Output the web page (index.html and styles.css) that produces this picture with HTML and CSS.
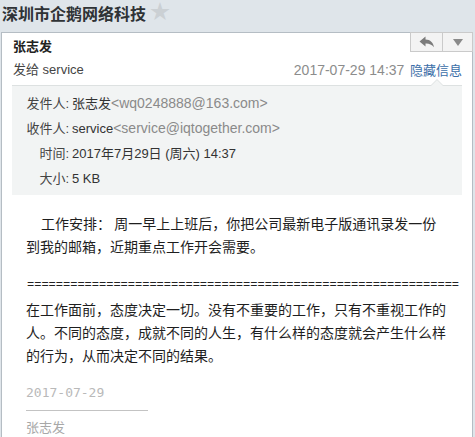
FILE: index.html
```html
<!DOCTYPE html>
<html lang="zh-CN">
<head>
    <meta charset="UTF-8">
    <meta name="viewport" content="width=device-width, initial-scale=1.0">
    <title>深圳市企鹅网络科技</title>
    <link rel="stylesheet" href="styles.css">
</head>
<body>
    <div class="topbar">
        <span class="subject">深圳市企鹅网络科技</span>
        <span class="star">★</span>
    </div>

    <div class="card">
        <div class="actions">
            <button class="act reply" title="回复">
                <svg width="16" height="12" viewBox="0 0 16 12"><path d="M6.5 0.5 L0.5 5.5 L6.5 10.5 V7.4 C10 7.2 12.6 8.3 15 11.2 C14.2 6.6 11.4 3.8 6.5 3.6 Z" fill="#7b7b7b"/></svg>
            </button>
            <button class="act more" title="更多">
                <svg width="10" height="7" viewBox="0 0 10 7"><path d="M0 0 H10 L5 7 Z" fill="#8a8a8a"/></svg>
            </button>
        </div>

        <div class="head">
            <div class="from-name">张志发</div>
            <div class="head-row">
                <span class="to">发给 service</span>
                <span class="meta">
                    <span class="date">2017-07-29 14:37</span>
                    <a class="toggle" href="#">隐藏信息</a>
                </span>
            </div>
        </div>

        <div class="info">
            <div class="info-row">
                <span class="label">发件人:</span>
                <span class="value">张志发<span class="addr">&lt;wq0248888@163.com&gt;</span></span>
            </div>
            <div class="info-row">
                <span class="label">收件人:</span>
                <span class="value">service<span class="addr">&lt;service@iqtogether.com&gt;</span></span>
            </div>
            <div class="info-row">
                <span class="label">时间:</span>
                <span class="value">2017年7月29日 (周六) 14:37</span>
            </div>
            <div class="info-row">
                <span class="label">大小:</span>
                <span class="value">5 KB</span>
            </div>
        </div>

        <div class="mail-body">
            <p class="intro">工作安排： 周一早上上班后，你把公司最新电子版通讯录发一份到我的邮箱，近期重点工作开会需要。</p>
            <div class="sep">============================================================</div>
            <p>在工作面前，态度决定一切。没有不重要的工作，只有不重视工作的人。不同的态度，成就不同的人生，有什么样的态度就会产生什么样的行为，从而决定不同的结果。</p>

            <div class="sign">
                <div class="sign-date">2017-07-29</div>
                <div class="sign-name">张志发</div>
            </div>
        </div>
    </div>
</body>
</html>
```

FILE: styles.css
```css
body {
    margin: 0;
    background-color: #dfe5ea;
    font-family: "Liberation Sans", "Noto Sans CJK SC", sans-serif;
    color: #333;
    font-size: 13px;
}
.topbar {
    height: 32px;
    padding-left: 2px;
    display: flex;
    align-items: flex-start;
}
.subject {
    font-family: "Noto Sans CJK SC", sans-serif;
    font-weight: bold;
    font-size: 16px;
    line-height: 26px;
    color: #2f3336;
}
.star {
    color: #cbd0d4;
    font-size: 20px;
    line-height: 25px;
    margin-left: 4px;
}
.card {
    position: relative;
    margin: 0 2px 0 1px;
    height: 405px;
    background-color: #fff;
    border: 1px solid #b5bdc4;
    border-bottom: none;
}
.actions {
    position: absolute;
    top: -1px;
    right: -1px;
    display: flex;
}
.act {
    height: 20px;
    padding: 0;
    margin: 0;
    background-color: #f3f3f3;
    border: 1px solid #cacaca;
    display: flex;
    align-items: center;
    justify-content: center;
}
.reply {
    width: 33px;
}
.more {
    width: 30px;
    border-left: none;
}
.head {
    padding: 3px 10px 0 11px;
}
.from-name {
    font-family: "Noto Sans CJK SC", sans-serif;
    font-weight: bold;
    line-height: 20px;
    color: #222;
}
.head-row {
    display: flex;
    justify-content: space-between;
    margin-top: 4px;
    line-height: 20px;
}
.to {
    color: #444;
}
.date {
    color: #8c8c8c;
    font-size: 14px;
}
.toggle {
    color: #3b6ea8;
    text-decoration: none;
    margin-left: 2px;
}
.info {
    position: relative;
    margin: 4px 10px 0 10px;
    padding: 5px 0 4px 0;
    background-color: #f2f4f4;
    border-top: 1px solid #dde1e1;
}
.info::before {
    content: "";
    position: absolute;
    top: -7px;
    right: 18px;
    border: 7px solid transparent;
    border-top: none;
    border-bottom-color: #dde1e1;
}
.info::after {
    content: "";
    position: absolute;
    top: -6px;
    right: 19px;
    border: 6px solid transparent;
    border-top: none;
    border-bottom-color: #f2f4f4;
}
.info-row {
    display: flex;
    line-height: 25px;
}
.label {
    width: 57px;
    text-align: right;
    color: #444;
}
.value {
    margin-left: 3px;
    color: #333;
}
.addr {
    color: #8a8a8a;
    font-size: 14px;
}
.mail-body {
    margin: 17px 25px 0 24px;
    font-family: "Noto Sans CJK SC", sans-serif;
    font-size: 14px;
    line-height: 23px;
    color: #1e1e1e;
}
.mail-body p {
    margin: 0;
}
.intro {
    text-indent: 15px;
}
.sep {
    margin-top: 15px;
    margin-left: 1px;
    line-height: 25px;
    white-space: nowrap;
    font-family: "Liberation Mono", monospace;
    font-size: 12px;
    color: #222;
}
.sign {
    margin-top: 13px;
}
.sign-date {
    display: inline-block;
    width: 122px;
    padding-bottom: 7px;
    border-bottom: 1px solid #c3c3c3;
    font-family: "DejaVu Sans Mono", monospace;
    font-size: 13px;
    line-height: 20px;
    color: #b9b9b9;
}
.sign-name {
    margin-top: 6px;
    font-size: 13px;
    line-height: 20px;
    color: #a8a8a8;
}
```
